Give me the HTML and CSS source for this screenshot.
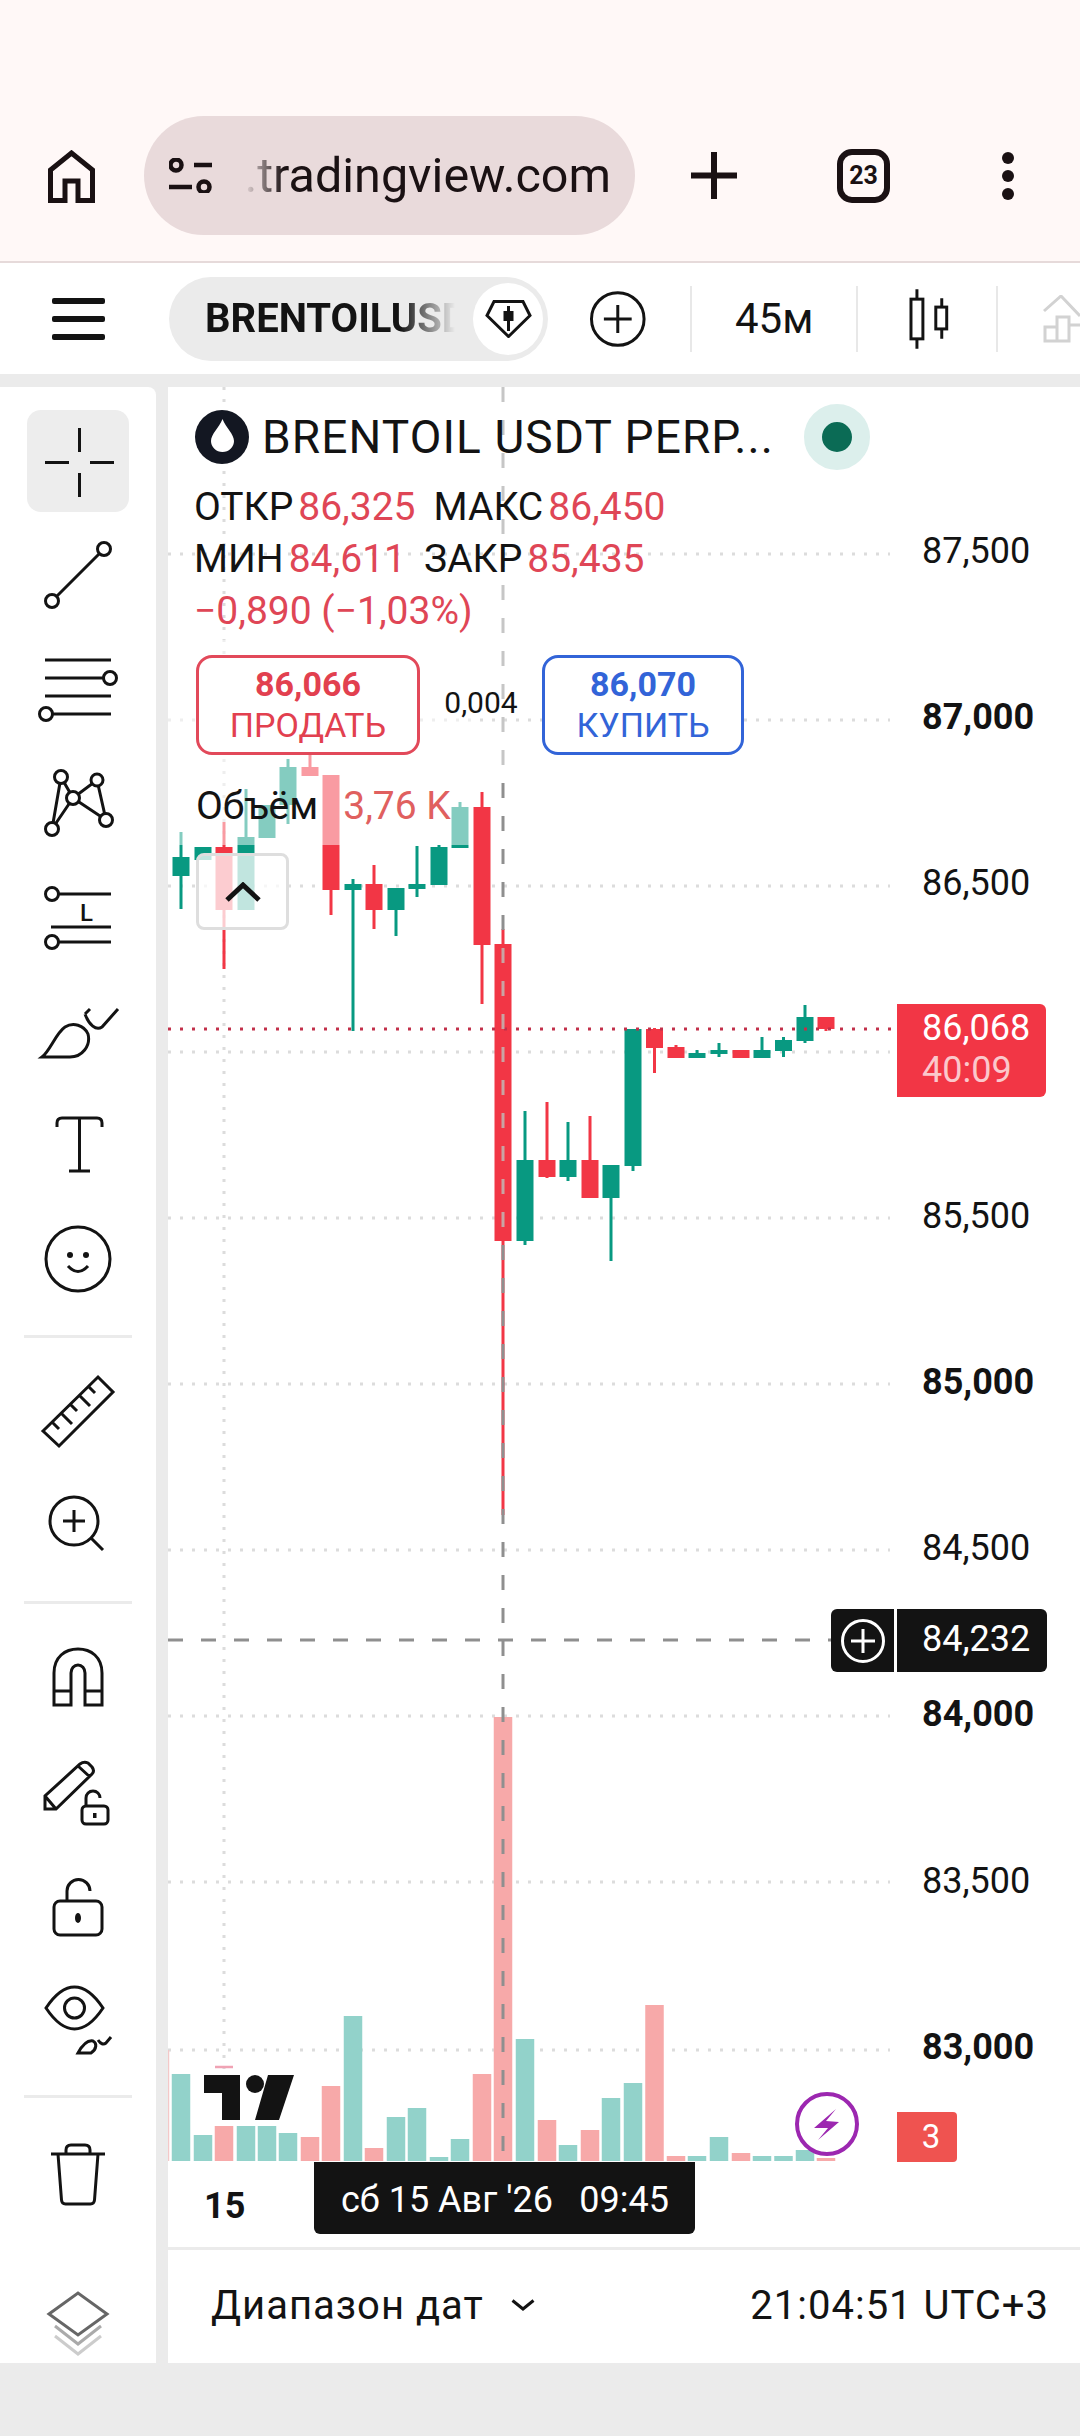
FILE: index.html
```html
<!DOCTYPE html>
<html lang="ru">
<head>
    <meta charset="UTF-8">
    <meta name="viewport" content="width=device-width, initial-scale=1.0">
    <title>BRENTOIL USDT PERP</title>
    <link rel="stylesheet" href="styles.css">
</head>
<body>
    <header class="browser-bar">
        <svg class="icon-home" width="47" height="53" viewBox="0 0 47 53"><path d="M2.5 50.5V20L23.5 3l21 17v30.500H30V31H17v19.500z"/></svg>
        <div class="url-pill">
            <svg class="icon-tune" width="43" height="35" viewBox="0 0 43 35"><circle cx="7" cy="7" r="5.500"/><path d="M25 7h18M0 29h23"/><circle cx="35" cy="29" r="5.500"/></svg>
            <div class="url-text"><span>u.tradingview.com</span></div>
        </div>
        <svg class="icon-plus" width="46" height="47" viewBox="0 0 46 47"><path d="M23 0v47M0 23.500h46"/></svg>
        <div class="tab-count">23</div>
        <div class="dots"><i></i><i></i><i></i></div>
    </header>

    <nav class="top-toolbar">
        <div class="burger"><i></i><i></i><i></i></div>
        <div class="symbol-pill">
            <span class="symbol-name">BRENTOILUSDT</span>
            <span class="symbol-badge">
                <svg width="47" height="38" viewBox="0 0 47 38"><path class="gem" d="M9 1.500h29l7 14-21.500 21L2 15.500z"/><path d="M23.500 6v25" class="gem"/><rect x="18.500" y="11" width="10" height="10"/></svg>
            </span>
        </div>
        <svg class="icon-add" width="58" height="58" viewBox="0 0 58 58"><circle cx="29" cy="29" r="26.500"/><path d="M29 15v28M15 29h28"/></svg>
        <span class="bar-sep sep-a"></span>
        <span class="interval">45м</span>
        <span class="bar-sep sep-b"></span>
        <svg class="icon-candles" width="40" height="60" viewBox="0 0 40 60"><path d="M8 0v10M8 50v10M33 9v9M33 40v10"/><rect x="2" y="10" width="12" height="40"/><rect x="27" y="18" width="11" height="22"/></svg>
        <span class="bar-sep sep-c"></span>
        <svg class="icon-faded" width="37" height="48" viewBox="0 0 37 48"><path d="M1 16L18 1l19 20M2 46V32h12v14zM14 46V22h12v24zM26 46V30h11"/></svg>
    </nav>

    <main class="workspace">
        <aside class="tools">
            <div class="tool-group first">
                <div class="tool"><div class="tool-active">
                    <svg width="80" height="80" viewBox="0 0 80 80"><path d="M7 41.500h24M52 41.500h24M41.500 7v24M41.500 52v24"/></svg>
                </div></div>
                <div class="tool"><svg width="80" height="80" viewBox="0 0 80 80"><path d="M19 61L61 19"/><circle cx="66" cy="14" r="6.500"/><circle cx="14" cy="66" r="6.500"/></svg></div>
                <div class="tool"><svg width="80" height="80" viewBox="0 0 80 80"><path d="M7 11h66M7 29h59M7 47h66M14 65h59"/><circle cx="72" cy="29" r="6.500"/><circle cx="8" cy="65" r="6.500"/></svg></div>
                <div class="tool"><svg width="80" height="80" viewBox="0 0 80 80"><path d="M23 14L14 66L35 35L23 14M35 35L59 17L68 57L35 35"/><circle cx="23" cy="14" r="6.500"/><circle cx="59" cy="17" r="6"/><circle cx="35" cy="35" r="6.500"/><circle cx="14" cy="66" r="6.500"/><circle cx="68" cy="57" r="6.500"/></svg></div>
                <div class="tool"><svg width="80" height="80" viewBox="0 0 80 80"><path d="M20 17h53M13 50h60M20 65h53"/><circle cx="14" cy="17" r="6.500"/><circle cx="14" cy="65" r="6.500"/><text x="42" y="44" class="tool-letter">L</text></svg></div>
                <div class="tool"><svg width="80" height="80" viewBox="0 0 80 80"><path d="M4 66C12 60 18 42 27 36C35 31 46 34 50 43C53 55 44 66 32 66zM47 23L52 18M47 23C51 34 58 40 64 36L80 18"/></svg></div>
                <div class="tool"><svg width="80" height="80" viewBox="0 0 80 80"><path d="M19 22v-4q0-5 5-5h35q5 0 5 5v4M41.500 13v53M31 66h21"/></svg></div>
                <div class="tool"><svg width="80" height="80" viewBox="0 0 80 80"><circle cx="40" cy="40" r="32"/><path d="M30 47q10 11 20 0"/><circle class="dot" cx="32" cy="36" r="3"/><circle class="dot" cx="48" cy="36" r="3"/></svg></div>
            </div>
            <div class="tool-sep"></div>
            <div class="tool-group">
                <div class="tool"><svg width="80" height="80" viewBox="0 0 80 80"><path d="M5 60L60 6L75 21L21 75zM14 51l7 7M23 42l11 11M32 33l7 7M41 24l11 11M50 15l7 7"/></svg></div>
                <div class="tool"><svg width="80" height="80" viewBox="0 0 80 80"><circle cx="36" cy="36" r="24"/><path d="M25 36h22M36 25v22M53 53l12 12"/></svg></div>
            </div>
            <div class="tool-sep"></div>
            <div class="tool-group">
                <div class="tool"><svg width="80" height="80" viewBox="0 0 80 80"><path d="M16 68V36C16 20 27 12 40 12C53 12 64 20 64 36V68H47V36a7 8 0 0 0-14 0V68zM16 54h17M47 54h17"/></svg></div>
                <div class="tool"><svg width="80" height="80" viewBox="0 0 80 80"><path d="M7 58V45L42 13Q46 10 50 12L54 16Q57 20 54 23L18 58zM7 45L18 58M40 15L52 26"/><rect x="44" y="55" width="26" height="18" rx="4"/><path d="M48 55v-8a7 7 0 0 1 14 0"/><rect class="dot" x="55" y="62" width="3.500" height="5"/></svg></div>
                <div class="tool"><svg width="80" height="80" viewBox="0 0 80 80"><rect x="16" y="36" width="48" height="34" rx="6"/><path d="M29 36V26a11.500 11.500 0 0 1 23 0"/><ellipse class="dot" cx="40" cy="53" rx="3" ry="5"/></svg></div>
                <div class="tool"><svg width="80" height="80" viewBox="0 0 80 80"><path d="M8 29C18 14 27 8 36.500 8C46 8 55 14 65 29C55 44 46 50 36.500 50C27 50 18 44 8 29z"/><circle cx="36.500" cy="29" r="10"/><path d="M40 74C45 65 50 61 55 62C59 64 59 70 53 74zM60 61q4 6 8 3L73 58"/></svg></div>
            </div>
            <div class="tool-sep"></div>
            <div class="tool-group last">
                <div class="tool"><svg width="80" height="80" viewBox="0 0 80 80"><path d="M13 19h54M20 19l3.500 46q.3 4 4 4h25q3.700 0 4-4L60 19M28 19v-4q0-5 5-5h14q5 0 5 5v4"/></svg></div>
            </div>
            <div class="tool tool-layers"><svg width="80" height="80" viewBox="0 0 80 80"><path class="layer-a" d="M11 31L40 10L69 31L40 52z"/><path class="layer-b" d="M17 43L40 61L63 43"/><path class="layer-c" d="M17 53L40 71L63 53"/></svg></div>
        </aside>

        <section class="chart">
            <div class="canvas">
                <svg class="plot" width="912" height="1860" viewBox="168 387 912 1860">
                    <path class="grid" d="M168 554H890M168 720H890M168 886H890M168 1052H890M168 1218H890M168 1384H890M168 1550H890M168 1716H890M168 1882H890M168 2050H890M224 387V2161"/>
                    <path class="vol-up" d="M181 2161V2074M203 2161V2135M246 2161V2126M267 2161V2126M288 2161V2133M353 2161V2016M396 2161V2117M417 2161V2108M439 2161V2157M460 2161V2139M525 2161V2039M568 2161V2145M611 2161V2098M633 2161V2083M697 2161V2156M719 2161V2137M762 2161V2156M783.500 2161V2156M805 2161V2150"/>
                    <path class="vol-down" d="M224 2161V2126M310 2161V2137M331 2161V2086M374 2161V2148M482 2161V2074M503 2161V1717M547 2161V2120M590 2161V2130M654.500 2161V2005M676 2161V2156M741 2161V2153M826 2161V2158"/>
                    <path class="vol-edge" d="M168.500 2050V2161M215.500 2100V2126"/>
                    <path class="vol-cap" d="M215 2067H233"/>

                    <path class="wick-up" d="M181 832V909M246 789V910M288 759V824M353 879V1031M396 888V936M417 846V897M439 845V885M460 802V848M525 1111V1245M568 1122V1181M611 1165V1261M633 1029V1171M697 1050V1058M719 1043V1057M762 1037V1058M783.500 1037V1057M805 1005V1043"/>
                    <path class="wick-down" d="M224 822V969M310 755V776M331 775V915M374 865V929M482 792V1004M503 929V1515M547 1102V1178M590 1116V1198M654.500 1028V1073M676 1045V1058M826 1017V1031"/>
                    <path class="body-up" d="M181 857V876M203 847V860M246 837V910M267 805V838M288 767V805M353 884V890M396 888V910M417 884V889M439 847V885M460 807V848M525 1160V1241M568 1160V1177M611 1165V1198M633 1029V1166M697 1053V1058M719 1050V1054M762 1050V1058M783.500 1040V1051M805 1017V1041"/>
                    <path class="body-down" d="M224 847V910M310 767V776M331 775V890M374 884V910M482 807V945M503 944V1241M547 1160V1177M590 1160V1198M654.500 1029V1048M676 1047V1058M741 1050V1058M826 1017V1029"/>
                    <rect class="legend-fade" x="168" y="640" width="304" height="205"/>

                    <path class="last-price" d="M168 1029H897"/>
                    <path class="crosshair-faint" d="M503 387V783"/>
                    <path class="crosshair" d="M503 783V948M503 1245V2161M168 1640H831"/>
                    <path class="crosshair-bar" d="M503 948V1245"/>

                    <rect class="logo-halo" x="197" y="2069" width="103" height="57"/>
                    <path class="logo" d="M204 2075H240V2120H222V2093H204zM268 2075H294L279 2120H255z"/>
                    <circle class="logo" cx="255" cy="2084" r="9"/>

                    <circle class="flash-ring" cx="827" cy="2124" r="30"/>
                    <path class="flash" d="M836 2109L814 2128L828 2128L818 2140L839 2122L826 2121z"/>
                </svg>

                <div class="legend">
                    <div class="legend-title">
                        <span class="legend-logo">
                            <svg width="54" height="54" viewBox="0 0 54 54"><circle cx="27" cy="27" r="27"/><path d="M27.500 9C24 18 16 24 16 31a11.500 11 0 0 0 23 0C39 24 31 18 27.500 9z"/></svg>
                        </span>
                        <span class="legend-name">BRENTOIL USDT PERP...</span>
                    </div>
                    <div class="ohlc"><span>ОТКР</span><b>86,325</b><span class="ohlc-next">МАКС</span><b>86,450</b></div>
                    <div class="ohlc"><span>МИН</span><b>84,611</b><span class="ohlc-next">ЗАКР</span><b>85,435</b></div>
                    <div class="ohlc"><b class="change">−0,890 (−1,03%)</b></div>
                    <div class="trade-row">
                        <div class="trade-btn sell"><strong>86,066</strong><span>ПРОДАТЬ</span></div>
                        <div class="spread">0,004</div>
                        <div class="trade-btn buy"><strong>86,070</strong><span>КУПИТЬ</span></div>
                    </div>
                    <div class="volume-row"><span>Объём</span><b>3,76 K</b></div>
                    <div class="collapse-btn">
                        <svg width="36" height="20" viewBox="0 0 36 20"><path d="M2 18L18 3l16 15"/></svg>
                    </div>
                </div>

                <span class="status-dot"></span>

                <div class="price-axis">
                    <div>87,500</div>
                    <div class="major">87,000</div>
                    <div>86,500</div>
                    <div></div>
                    <div>85,500</div>
                    <div class="major">85,000</div>
                    <div>84,500</div>
                    <div class="major">84,000</div>
                    <div>83,500</div>
                    <div class="major">83,000</div>
                </div>

                <div class="price-tag">
                    <span>86,068</span>
                    <span class="countdown">40:09</span>
                </div>

                <div class="cross-tag">
                    <span class="cross-add">
                        <svg width="44" height="44" viewBox="0 0 44 44"><circle cx="22" cy="22" r="20.500"/><path d="M22 10v24M10 22h24"/></svg>
                    </span>
                    <span class="cross-price">84,232</span>
                </div>

                <div class="alert-count">3</div>
                <div class="date-tick">15</div>
                <div class="date-tip"><span>сб 15 Авг '26</span><span>09:45</span></div>
            </div>
            <footer class="range-bar">
                <div class="range-pick">Диапазон дат
                    <svg width="24" height="12" viewBox="0 0 24 12"><path d="M1.500 1.500L12 10L22.500 1.500"/></svg>
                </div>
                <div class="clock">21:04:51 UTC+3</div>
            </footer>
        </section>
    </main>
</body>
</html>
```

FILE: styles.css
```css
* {
    box-sizing: border-box;
}
body {
    margin: 0;
    width: 1080px;
    height: 2436px;
    overflow: hidden;
    background-color: #ebebeb;
    font-family: Roboto, "Noto Sans", sans-serif;
    color: #131722;
}

/* browser chrome */
.browser-bar {
    height: 263px;
    padding-top: 116px;
    display: flex;
    align-items: flex-start;
    background-color: #fff8f7;
    border-bottom: 2px solid #e6dada;
}
.icon-home {
    margin: 34px 0 0 48px;
    fill: none;
    stroke: #1a1113;
    stroke-width: 5;
}
.url-pill {
    width: 491px;
    height: 119px;
    margin-left: 49px;
    padding: 0 24px 0 25px;
    display: flex;
    align-items: center;
    border-radius: 60px;
    background-color: #e9dadb;
}
.icon-tune {
    flex: none;
    fill: none;
    stroke: #1a1113;
    stroke-width: 4.500;
}
.url-text {
    flex: 1;
    margin-left: 32px;
    display: flex;
    justify-content: flex-end;
    overflow: hidden;
    font-size: 48.500px;
    line-height: 60px;
    white-space: nowrap;
    color: #1a1113;
    -webkit-mask-image: linear-gradient(to right, transparent 0, #000 40px);
    mask-image: linear-gradient(to right, transparent 0, #000 40px);
}
.url-text span {
    flex: none;
}
.icon-plus {
    margin: 36px 0 0 56px;
    stroke: #1a1113;
    stroke-width: 6;
}
.tab-count {
    width: 53px;
    height: 54px;
    margin: 33px 0 0 100px;
    border: 6px solid #1a1113;
    border-radius: 15px;
    font-size: 25px;
    font-weight: 700;
    line-height: 42px;
    text-align: center;
    color: #1a1113;
}
.dots {
    margin: 36px 0 0 112px;
    display: flex;
    flex-direction: column;
    gap: 6px;
}
.dots i {
    width: 12px;
    height: 12px;
    border-radius: 50%;
    background-color: #1a1113;
}

/* chart toolbar */
.top-toolbar {
    height: 111px;
    display: flex;
    align-items: center;
    overflow: hidden;
    background-color: #fff;
}
.burger {
    margin-left: 52px;
    display: flex;
    flex-direction: column;
    gap: 12px;
}
.burger i {
    width: 53px;
    height: 6px;
    border-radius: 2px;
    background-color: #131313;
}
.symbol-pill {
    position: relative;
    width: 382px;
    height: 84px;
    margin-left: 64px;
    padding-left: 36px;
    display: flex;
    align-items: center;
    border-radius: 42px;
    background-color: #ebebeb;
}
.symbol-name {
    width: 250px;
    overflow: hidden;
    font-size: 40px;
    font-weight: 700;
    white-space: nowrap;
    color: #131313;
    -webkit-mask-image: linear-gradient(to right, #000 78%, transparent 100%);
    mask-image: linear-gradient(to right, #000 78%, transparent 100%);
}
.symbol-badge {
    position: absolute;
    right: 5px;
    top: 6px;
    width: 70px;
    height: 72px;
    display: flex;
    align-items: center;
    justify-content: center;
    border-radius: 50%;
    background-color: #fff;
}
.symbol-badge rect {
    fill: #131313;
}
.gem {
    fill: none;
    stroke: #131313;
    stroke-width: 3;
}
.icon-add {
    margin-left: 41px;
    fill: none;
    stroke: #131313;
    stroke-width: 3;
}
.bar-sep {
    width: 2px;
    height: 66px;
    background-color: #e8e8e8;
}
.sep-a {
    margin-left: 43px;
}
.interval {
    width: 80px;
    margin-left: 43px;
    font-size: 42px;
    white-space: nowrap;
    color: #131313;
}
.sep-b {
    margin-left: 42px;
}
.icon-candles {
    margin-left: 51px;
    fill: none;
    stroke: #131313;
    stroke-width: 3;
}
.sep-c {
    margin-left: 47px;
}
.icon-faded {
    flex: none;
    margin-left: 45px;
    fill: none;
    stroke: #d2d2d2;
    stroke-width: 3;
}

/* left tools */
.workspace {
    height: 1976px;
    margin-top: 13px;
    display: flex;
    gap: 12px;
}
.tools {
    width: 156px;
    display: flex;
    flex-direction: column;
    background-color: #fff;
    border-radius: 0 8px 0 0;
}
.tool-group {
    padding: 16px 0 19px;
}
.tool-group.first {
    padding-top: 17px;
}
.tool-group.last {
    padding-top: 20px;
}
.tool {
    height: 114px;
    display: flex;
    align-items: center;
    justify-content: center;
}
.tool svg {
    overflow: visible;
    fill: none;
    stroke: #131313;
    stroke-width: 3;
}
.tool circle {
    fill: #fff;
}
.tool .dot {
    fill: #131313;
    stroke: none;
}
.tool-letter {
    font-size: 24px;
    font-weight: 500;
    fill: #131313;
    stroke: none;
}
.tool-active {
    width: 102px;
    height: 102px;
    display: flex;
    align-items: center;
    justify-content: center;
    border-radius: 14px;
    background-color: #ededed;
}
.tool-sep {
    height: 3px;
    margin: 0 24px;
    background-color: #ebebeb;
}
.tool-layers {
    height: 80px;
    margin-top: auto;
}
.tool svg .layer-a {
    stroke: #666;
}
.tool svg .layer-b {
    stroke: #aaa;
}
.tool svg .layer-c {
    stroke: #ccc;
}

/* chart */
.chart {
    flex: 1;
    display: flex;
    flex-direction: column;
    background-color: #fff;
}
.canvas {
    position: relative;
    height: 1860px;
}
.plot {
    position: absolute;
    left: 0;
    top: 0;
}
.plot path {
    fill: none;
}
.plot .grid {
    stroke: #dcdcdc;
    stroke-width: 3;
    stroke-dasharray: 3 9;
}
.plot .vol-up {
    stroke: #92d2ca;
    stroke-width: 18.500;
}
.plot .vol-down {
    stroke: #f7a9a9;
    stroke-width: 18.500;
}
.plot .vol-edge {
    stroke: #f3c8c8;
    stroke-width: 1.500;
}
.plot .vol-cap {
    stroke: #f0a3b4;
    stroke-width: 2.500;
}
.plot .wick-up {
    stroke: #089981;
    stroke-width: 3;
}
.plot .wick-down {
    stroke: #f23645;
    stroke-width: 3;
}
.plot .body-up {
    stroke: #089981;
    stroke-width: 17;
}
.plot .body-down {
    stroke: #f23645;
    stroke-width: 17;
}
.legend-fade {
    fill: #fff;
    fill-opacity: 0.5;
}
.plot .last-price {
    stroke: #c2304a;
    stroke-width: 3;
    stroke-dasharray: 3 9;
}
.plot .crosshair {
    stroke: #8f8f8f;
    stroke-width: 3;
    stroke-dasharray: 15 18;
}
.plot .crosshair-faint {
    stroke: #c6c6c6;
    stroke-width: 3;
    stroke-dasharray: 15 18;
}
.plot .crosshair-bar {
    stroke: #c9a3a3;
    stroke-width: 3;
    stroke-dasharray: 15 18;
}
.logo-halo {
    fill: #fff;
}
.plot .logo {
    fill: #131313;
}
.flash-ring {
    fill: #fff;
    stroke: #9c27b0;
    stroke-width: 4;
}
.plot .flash {
    fill: #9c27b0;
}

/* legend over the chart */
.legend {
    position: absolute;
    left: 26px;
    top: 23px;
    width: 640px;
}
.legend-title {
    height: 54px;
    margin-left: 1px;
    display: flex;
    align-items: center;
}
.legend-logo {
    height: 54px;
}
.legend-logo circle {
    fill: #131722;
}
.legend-logo path {
    fill: #fff;
}
.legend-name {
    margin-left: 13px;
    font-size: 46px;
    letter-spacing: 1.100px;
    white-space: nowrap;
    color: #131313;
}
.ohlc {
    height: 52px;
    display: flex;
    font-size: 39px;
    line-height: 52px;
    white-space: nowrap;
    color: #131313;
}
.legend-title + .ohlc {
    margin-top: 17px;
}
.ohlc b {
    margin-left: 5px;
    font-weight: 400;
    color: #df4656;
}
.ohlc .change {
    margin-left: 0;
}
.ohlc-next {
    margin-left: 18px;
}
.trade-row {
    margin: 18px 0 0 2px;
    display: flex;
}
.trade-btn {
    height: 100px;
    display: flex;
    flex-direction: column;
    align-items: center;
    justify-content: center;
    border: 3px solid;
    border-radius: 16px;
    background-color: #fff;
    font-size: 34px;
    line-height: 41px;
}
.trade-btn strong {
    font-weight: 700;
}
.sell {
    width: 224px;
    color: #e2404f;
    border-color: #e2495a;
}
.buy {
    width: 202px;
    color: #3264d8;
    border-color: #3264d8;
}
.spread {
    width: 122px;
    font-size: 30px;
    line-height: 96px;
    text-align: center;
    color: #131313;
}
.volume-row {
    height: 52px;
    margin: 25px 0 0 2px;
    display: flex;
    gap: 25px;
    font-size: 39px;
    line-height: 52px;
    color: #131313;
}
.volume-row b {
    font-weight: 400;
    color: #e0605f;
}
.collapse-btn {
    width: 93px;
    height: 77px;
    margin: 21px 0 0 2px;
    display: flex;
    align-items: center;
    justify-content: center;
    border: 3px solid #dedede;
    border-radius: 8px;
    background-color: rgba(255, 255, 255, 0.75);
}
.collapse-btn svg {
    fill: none;
    stroke: #131313;
    stroke-width: 5;
}
.status-dot {
    position: absolute;
    left: 636px;
    top: 17px;
    width: 66px;
    height: 66px;
    border: 18px solid #dcefec;
    border-radius: 50%;
    background-color: #0b6b55;
}

/* price scale */
.price-axis {
    position: absolute;
    left: 754px;
    top: 81px;
    font-size: 36px;
    color: #131313;
}
.price-axis div {
    height: 166.200px;
    line-height: 166.200px;
}
.price-axis .major {
    font-weight: 700;
}
.price-tag {
    position: absolute;
    left: 729px;
    top: 617px;
    width: 149px;
    height: 93px;
    padding: 3px 0 0 25px;
    display: flex;
    flex-direction: column;
    border-radius: 0 6px 6px 0;
    background-color: #f23645;
    font-size: 36px;
    line-height: 42px;
    color: #fff;
}
.countdown {
    color: #fbc8cc;
}
.cross-tag {
    position: absolute;
    left: 663px;
    top: 1222px;
    height: 63px;
    display: flex;
    gap: 3px;
    color: #fff;
}
.cross-add {
    width: 63px;
    display: flex;
    align-items: center;
    justify-content: center;
    border-radius: 6px 0 0 6px;
    background-color: #131313;
}
.cross-add svg {
    fill: none;
    stroke: #fff;
    stroke-width: 3;
}
.cross-price {
    width: 150px;
    padding-left: 25px;
    border-radius: 0 6px 6px 0;
    background-color: #131313;
    font-size: 36px;
    line-height: 60px;
}
.alert-count {
    position: absolute;
    left: 729px;
    top: 1725px;
    width: 60px;
    height: 50px;
    padding-left: 8px;
    border-radius: 0 4px 4px 0;
    background-color: #ef5350;
    font-size: 33px;
    line-height: 50px;
    text-align: center;
    color: #fff;
}

/* time scale */
.date-tick {
    position: absolute;
    left: 36px;
    top: 1798px;
    width: 40px;
    font-size: 36px;
    font-weight: 700;
    line-height: 42px;
    text-align: center;
    color: #131313;
}
.date-tip {
    position: absolute;
    left: 146px;
    top: 1775px;
    width: 381px;
    height: 72px;
    padding: 0 26px 0 27px;
    display: flex;
    justify-content: space-between;
    border-radius: 0 0 6px 6px;
    background-color: #131313;
    font-size: 36px;
    line-height: 76px;
    color: #fff;
}

/* bottom bar */
.range-bar {
    height: 116px;
    padding: 0 31px 3px 43px;
    display: flex;
    align-items: center;
    justify-content: space-between;
    border-top: 3px solid #ebebeb;
    font-size: 40px;
    letter-spacing: 1px;
    color: #131313;
}
.range-pick {
    display: flex;
    align-items: center;
    gap: 27px;
}
.range-pick svg {
    fill: none;
    stroke: #131313;
    stroke-width: 3;
}
```
